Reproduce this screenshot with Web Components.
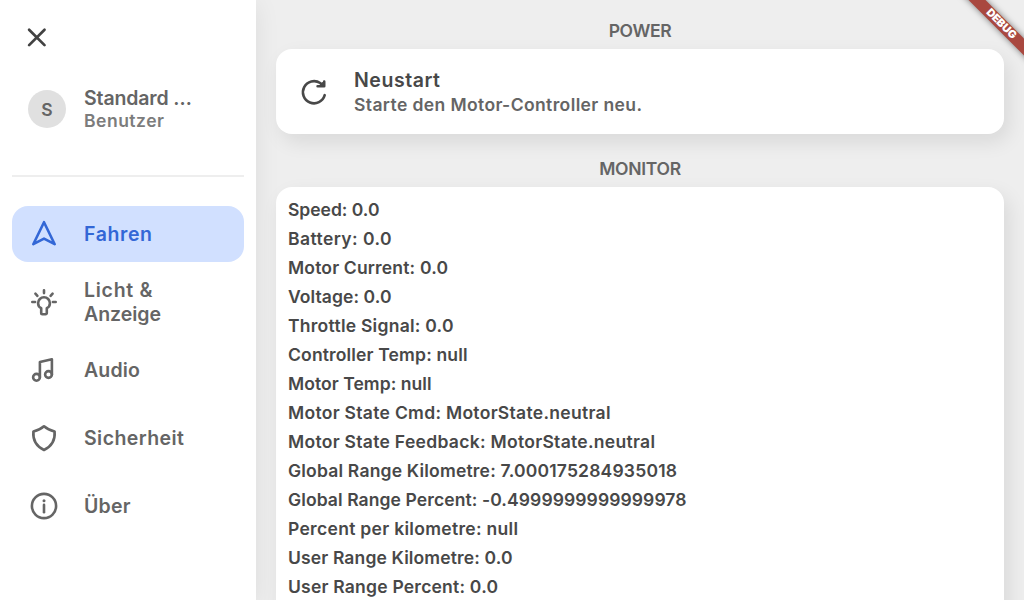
<!DOCTYPE html>
<html lang="de">
<head>
<meta charset="utf-8">
<title>Einstellungen</title>
<style>
html,body{margin:0;height:100%;overflow:hidden;background:#eee}
body{font-family:Inter,Roboto,"Liberation Sans",sans-serif;font-weight:600;color:#484848}
</style>
</head>
<body>
<settings-app></settings-app>
<script>
function define(name, html, setup) {
  customElements.define(name, class extends HTMLElement {
    connectedCallback() {
      if (this.shadowRoot) return;
      const t = document.createElement('template');
      t.innerHTML = html;
      this.attachShadow({mode: 'open'}).append(t.content.cloneNode(true));
      if (setup) setup(this, this.shadowRoot);
    }
  });
}

// One line of text, tracked so that it spans the width given by its "w" attribute.
define('tracked-text', `<style>
:host{display:block;white-space:nowrap}
span{display:inline-block;font-size:.975em}
</style><span><slot></slot></span>`, (host, root) => {
  const span = root.querySelector('span');
  const n = [...host.textContent].length;
  const gap = (Number(host.getAttribute('w')) - span.getBoundingClientRect().width) / (n - 1);
  span.style.letterSpacing = gap.toFixed(3) + 'px';
});

const ICONS = {
  close: '<path d="M4.9 4.5l14.8 14.8M19.7 4.5l-14.8 14.8"/>',
  drive: '<path d="M16 4.2L26.7 26.2L16 20.6L5.3 26.2Z"/>',
  light: '<path d="M13.2 27V22.2C11.2 21.2 10.1 19.3 10.1 17.2a5.9 5.9 0 0 1 11.8 0C21.9 19.3 20.8 21.2 18.8 22.2V27a1.2 1.2 0 0 1-1.2 1.2H14.4A1.2 1.2 0 0 1 13.2 27ZM16 4.3v2.8M4.3 16h2.8M24.9 16h2.8M7.4 7.7l2 2.2M24.6 7.7l-2 2.2"/>',
  audio: '<circle cx="8.5" cy="23.3" r="3.4"/><circle cx="20.5" cy="20.5" r="3.4"/><path d="M11.9 23.3V8L23.9 5.2V20.5"/>',
  shield: '<path d="M16 4.3C18.8 6.8 22 8.3 26.6 9.4C27.3 17.5 24.3 24 16 28C7.7 24 4.7 17.5 5.4 9.4C10 8.3 13.2 6.8 16 4.3Z"/>',
  info: '<circle cx="16" cy="16" r="12.1"/><path d="M16 14.9v7.3" stroke-width="2.6"/><circle cx="16" cy="10.7" r="1.5" fill="currentColor" stroke="none"/>',
  restart: '<path d="M26.7 19.2A11.1 11.1 0 1 1 22.2 7L25 9.2M26.2 5.5V10.2L19.6 10.2"/><path d="M26.2 5.5V10.2H21Z" fill="currentColor" stroke-width="1"/>'
};
define('line-icon', `<style>
:host{display:block;width:32px;height:32px;flex:none}
svg{display:block;width:100%;height:100%;fill:none;stroke:currentColor;stroke-width:2.6;stroke-linecap:round;stroke-linejoin:round}
</style><svg viewBox="0 0 32 32"></svg>`, (host, root) => {
  const svg = root.querySelector('svg');
  const name = host.getAttribute('name');
  if (name === 'close') svg.setAttribute('viewBox', '0 0 24 24');
  svg.innerHTML = ICONS[name];
});

define('nav-item', `<style>
:host{display:flex;box-sizing:border-box;height:56px;align-items:center;gap:24px;padding:0 16px;border-radius:16px;color:#656565;font-size:20px;line-height:24px}
:host([active]){background:#d1e0ff;color:#3367d6}
</style><line-icon></line-icon><div><slot></slot></div>`, (host, root) => {
  const old = root.querySelector('line-icon');
  const icon = document.createElement('line-icon');
  icon.setAttribute('name', host.getAttribute('icon'));
  old.replaceWith(icon);
});

define('user-profile', `<style>
:host{display:flex;align-items:center;gap:18px;height:48px;padding:0 16px;color:#656565}
.avatar{width:38px;height:38px;border-radius:50%;background:#e0e0e0;display:grid;place-items:center;font-size:17.5px;line-height:22px;padding-top:1px;box-sizing:border-box}
.text{padding-bottom:2px}
.name{font-size:20px;line-height:24px}
.role{font-size:18px;line-height:21px;color:#7c7c7c}
</style><div class="avatar">S</div><div class="text"><div class="name"><slot name="name"></slot></div><div class="role"><slot name="role"></slot></div></div>`);

define('side-bar', `<style>
:host{display:flex;flex-direction:column;box-sizing:border-box;width:256px;height:600px;padding:25px 12px 0;background:#fff;box-shadow:0 4px 24px rgba(0,0,0,.08);position:relative;z-index:1}
.close{width:25px;height:25px;margin-left:12px;color:#424242}
.profile{margin-top:35px}
hr{border:0;height:2px;background:#eee;margin:42px 0 29px;width:100%}
nav{display:flex;flex-direction:column;gap:12px}
</style>
<line-icon name="close" class="close"></line-icon>
<user-profile class="profile"><tracked-text slot="name" w="108">Standard …</tracked-text><tracked-text slot="role" w="80">Benutzer</tracked-text></user-profile>
<hr>
<nav>
<nav-item icon="drive" active><tracked-text w="68">Fahren</tracked-text></nav-item>
<nav-item icon="light"><tracked-text w="68.5">Licht &amp;</tracked-text><tracked-text w="77">Anzeige</tracked-text></nav-item>
<nav-item icon="audio"><tracked-text w="56">Audio</tracked-text></nav-item>
<nav-item icon="shield"><tracked-text w="100">Sicherheit</tracked-text></nav-item>
<nav-item icon="info"><tracked-text w="46.5">Über</tracked-text></nav-item>
</nav>`);

define('settings-section', `<style>
:host{display:flex;flex-direction:column}
header{display:flex;justify-content:center;font-size:18px;line-height:22px;color:#656565;margin-bottom:7px}
.card{background:#fff;border-radius:16px;box-shadow:5px 8px 20px rgba(0,0,0,.09)}
</style><header><slot name="title"></slot></header><div class="card"><slot></slot></div>`);

define('action-tile', `<style>
:host{display:flex;align-items:center;gap:24px;height:85px;padding:0 22px}
.title{font-size:20px;line-height:24px;padding-top:1px}
.sub{font-size:18px;line-height:25px;color:#656565}
</style><line-icon name="restart"></line-icon><div><div class="title"><slot name="label"></slot></div><div class="sub"><slot name="hint"></slot></div></div>`);

define('monitor-list', `<style>
:host{display:flex;flex-direction:column;gap:7px;padding:12px 12px 44px;font-size:18px;line-height:22px}
</style><slot></slot>`);

define('debug-banner', `<style>
:host{position:absolute;top:0;right:0;width:80px;height:80px;overflow:hidden;z-index:2}
div{position:absolute;left:-4px;top:17px;width:120px;height:12px;background:#a9483f;box-shadow:0 0 6px rgba(0,0,0,.5);transform:rotate(45deg);color:#fff;font:900 10.8px/12px Inter,Roboto,sans-serif;text-align:center;text-indent:3px}
</style><div><slot></slot></div>`);

define('settings-app', `<style>
:host{display:flex;height:600px;width:1024px;overflow:hidden;position:relative;background:#eee}
main{flex:1;min-width:0;display:flex;flex-direction:column;gap:24px;padding:20px 20px 0}
settings-section{flex:none}
</style>
<side-bar></side-bar>
<main>
<settings-section><tracked-text slot="title" w="63">POWER</tracked-text>
<action-tile><tracked-text slot="label" w="86">Neustart</tracked-text><tracked-text slot="hint" w="288">Starte den Motor-Controller neu.</tracked-text></action-tile></settings-section>
<settings-section><tracked-text slot="title" w="82">MONITOR</tracked-text>
<monitor-list>
<tracked-text w="91.5">Speed: 0.0</tracked-text>
<tracked-text w="103.5">Battery: 0.0</tracked-text>
<tracked-text w="160">Motor Current: 0.0</tracked-text>
<tracked-text w="103.5">Voltage: 0.0</tracked-text>
<tracked-text w="165.5">Throttle Signal: 0.0</tracked-text>
<tracked-text w="179.5">Controller Temp: null</tracked-text>
<tracked-text w="143.5">Motor Temp: null</tracked-text>
<tracked-text w="322.5">Motor State Cmd: MotorState.neutral</tracked-text>
<tracked-text w="367">Motor State Feedback: MotorState.neutral</tracked-text>
<tracked-text w="389">Global Range Kilometre: 7.000175284935018</tracked-text>
<tracked-text w="398.5">Global Range Percent: -0.4999999999999978</tracked-text>
<tracked-text w="230">Percent per kilometre: null</tracked-text>
<tracked-text w="224.5">User Range Kilometre: 0.0</tracked-text>
<tracked-text w="210">User Range Percent: 0.0</tracked-text>
</monitor-list></settings-section>
</main>
<debug-banner>DEBUG</debug-banner>`);
</script>
</body>
</html>
